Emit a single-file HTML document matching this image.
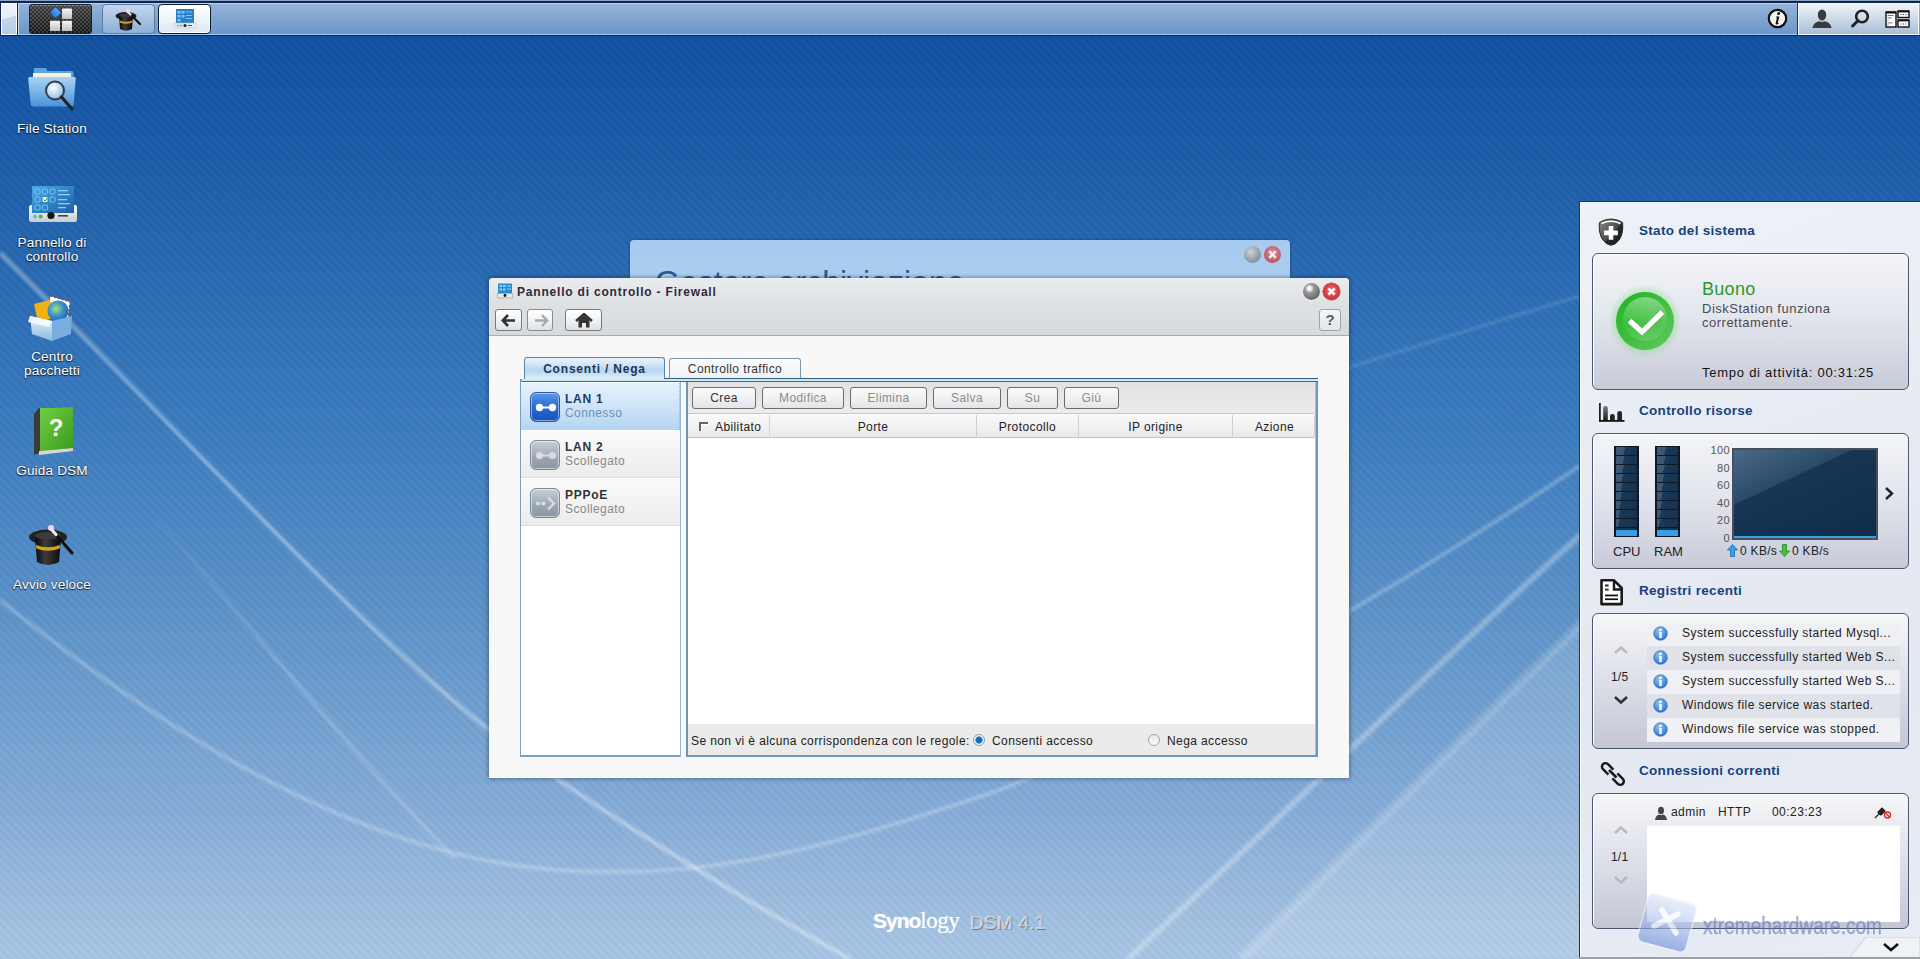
<!DOCTYPE html>
<html><head><meta charset="utf-8">
<style>
*{box-sizing:border-box;margin:0;padding:0}
html,body{width:1920px;height:959px;overflow:hidden}
body{position:relative;font-family:"Liberation Sans",sans-serif;background:#3b7cbf}
.abs{position:absolute}
#bg{position:absolute;left:0;top:0;width:1920px;height:959px}
/* top bar */
#topbar{position:absolute;left:0;top:0;width:1920px;height:36px;
 background:linear-gradient(#8ca2c2 0 1px,#0c2450 1px 3px,#b8d4f4 3px 4px,#95b3d8 4px,#6b97c9 34px,#a6c8ee 34px 35px,#0a2a5c 35px 36px)}
.tbtn{position:absolute;top:4px;height:30px;border-radius:4px}
/* desktop */
.dlabel{position:absolute;width:104px;text-align:center;color:#fff;font-size:13.6px;line-height:14px;letter-spacing:.15px;
 text-shadow:0 1px 1px rgba(0,0,0,.75),0 0 2px rgba(0,0,0,.5)}

.t{font-size:12px;letter-spacing:.4px;color:#222;white-space:nowrap;position:absolute;line-height:14px}
.tb{font-size:12px;letter-spacing:.75px;font-weight:bold;color:#333;white-space:nowrap;position:absolute;line-height:14px}
.btn{position:absolute;height:22px;border:1px solid #6c6c6c;border-radius:3px;background:linear-gradient(#fbfbfc,#f0f1f3 50%,#e2e5ea);
 font-size:12px;letter-spacing:.4px;text-align:center;line-height:21px;color:#8c8c8c}
.hdr{position:absolute;top:415px;height:23px;font-size:12px;letter-spacing:.4px;color:#222;text-align:center;line-height:24px;border-right:1px solid #d0d0d0}
.wbtn{position:absolute;width:17px;height:17px;border-radius:50%}

.pt{position:absolute;font-size:13.5px;font-weight:bold;color:#17427e;letter-spacing:.3px;white-space:nowrap;line-height:16px}
.box{position:absolute;left:1592px;width:317px;border:1px solid #4a5870;border-radius:6px;
 background:linear-gradient(#f4f5f8,#e4e6ee 45%,#c8cad8);box-shadow:inset 1px 1px 0 #fff}
.rt{position:absolute;font-size:13px;color:#222;white-space:nowrap;letter-spacing:.35px;line-height:15px}
</style></head><body>
<svg id="bg" width="1920" height="959" viewBox="0 0 1920 959">
 <defs>
  <linearGradient id="g1" x1="0" y1="0" x2="0" y2="1">
   <stop offset="0" stop-color="#0e4c9c"/>
   <stop offset="0.07" stop-color="#1254a3"/>
   <stop offset="0.14" stop-color="#195aa7"/>
   <stop offset="0.45" stop-color="#3b7cbf"/>
   <stop offset="0.68" stop-color="#6598cb"/>
   <stop offset="0.845" stop-color="#86acd8"/>
   <stop offset="0.95" stop-color="#a0bfdf"/>
   <stop offset="1" stop-color="#a8c5e5"/>
  </linearGradient>
  <pattern id="stripes" width="6" height="6" patternUnits="userSpaceOnUse" patternTransform="rotate(-45)">
   <rect width="2.5" height="6" fill="rgba(0,20,60,0.035)"/><rect x="3" width="2.5" height="6" fill="rgba(255,255,255,0.02)"/>
  </pattern>
 </defs>
 <rect width="1920" height="959" fill="url(#g1)"/>
 <defs>
  <filter id="blur1" x="-10%" y="-10%" width="120%" height="120%"><feGaussianBlur stdDeviation="1.6"/></filter>
  <filter id="blur8" x="-20%" y="-20%" width="140%" height="140%"><feGaussianBlur stdDeviation="10"/></filter>
  <linearGradient id="bfade" gradientUnits="userSpaceOnUse" x1="140" y1="500" x2="455" y2="859"><stop offset="0" stop-color="#fff" stop-opacity="0"/><stop offset=".5" stop-color="#fff" stop-opacity=".22"/><stop offset="1" stop-color="#fff" stop-opacity=".18"/></linearGradient>
  <linearGradient id="bandg" x1="0" y1="1" x2="1" y2="0"><stop offset="0" stop-color="#fff" stop-opacity=".18"/><stop offset="1" stop-color="#fff" stop-opacity=".05"/></linearGradient>
 </defs>
 <path d="M1240 959 C1350 850 1470 730 1600 605 L1600 959Z" fill="#fff" fill-opacity=".15" filter="url(#blur1)"/>
 <path d="M1240 959 C1350 850 1470 730 1600 605" fill="none" stroke="#fff" stroke-opacity=".14" stroke-width="10" filter="url(#blur1)"/>
 <g fill="none" stroke="#fff" filter="url(#blur1)">
  <path d="M0 253 C150 400 350 620 483 725 C560 785 700 875 850 959" stroke-opacity=".30" stroke-width="4.5"/>
  <path d="M0 253 C150 400 350 620 483 725 C560 785 700 875 850 959" stroke-opacity=".25" stroke-width="1.5"/>
  <path d="M0 600 C150 720 330 840 520 866 C700 890 850 840 1000 790 C1150 730 1400 590 1600 452" stroke-opacity=".22" stroke-width="4"/>
  <path d="M0 600 C150 720 330 840 520 866 C700 890 850 840 1000 790 C1150 730 1400 590 1600 452" stroke-opacity=".15" stroke-width="1.5"/>
  <path d="M1128 959 C1300 800 1450 650 1600 518" stroke-opacity=".22" stroke-width="7"/>
  <path d="M1128 959 C1300 800 1450 650 1600 518" stroke-opacity=".2" stroke-width="2"/>
  <path d="M1100 445 C1250 400 1400 350 1600 290" stroke-opacity=".14" stroke-width="3"/>
 </g>
 <path d="M140 500 C230 600 330 730 455 859" fill="none" stroke="url(#bfade)" stroke-width="3.5" filter="url(#blur1)"/>
 <rect width="1920" height="959" fill="url(#stripes)"/>
</svg>

<div id="topbar">
 <div class="abs" style="left:0;top:2px;width:18px;height:34px;background:#0c2450"></div><div class="abs" style="left:1px;top:3px;width:16px;height:32px;background:linear-gradient(165deg,#eef3f9 0%,#e6edf6 45%,#c4d6ea 46%,#b6cae4 100%);border:1px solid #fff"></div><div class="abs" style="left:18px;top:3px;width:1px;height:32px;background:#c8dcf4"></div>
 <!-- start button -->
 <div class="tbtn" style="left:29px;width:63px;border-radius:3px;background:
   linear-gradient(rgba(255,255,255,.12),rgba(0,0,0,.25)),repeating-conic-gradient(#4a4a4a 0 25%,#222 0 50%) 0 0/4px 4px;border:1px solid #14202e;box-shadow:inset 0 1px 0 rgba(255,255,255,.25)">
  <svg class="abs" style="left:18px;top:1px" width="26" height="27" viewBox="0 0 26 27">
   <defs><linearGradient id="sq" x1="0" y1="0" x2="0" y2="1"><stop offset="0" stop-color="#f6f6f6"/><stop offset="1" stop-color="#c0c0c0"/></linearGradient>
   <linearGradient id="dia" x1="0" y1="0" x2="0" y2="1"><stop offset="0" stop-color="#5aa8f8"/><stop offset="1" stop-color="#2a78d8"/></linearGradient></defs>
   <rect x="3.2" y="2.4" width="8.4" height="8.4" rx="1" transform="rotate(45 7.4 6.6)" fill="url(#dia)" stroke="#1a3a6a" stroke-width=".6"/>
   <rect x="14" y="2.5" width="10" height="10.5" rx="1.2" fill="url(#sq)"/>
   <rect x="2" y="14.8" width="10" height="10.3" rx="1.2" fill="url(#sq)"/>
   <rect x="14" y="14.8" width="10" height="10.3" rx="1.2" fill="url(#sq)"/>
  </svg>
 </div>
 <!-- hat button -->
 <div class="tbtn" style="left:102px;width:53px;background:linear-gradient(#c4d6ec,#8fb0d8);border:1px solid #5a7ca8">
  <svg class="abs" style="left:11px;top:2px" width="30" height="26" viewBox="0 0 30 26">
   <defs><linearGradient id="hat2" x1="0" y1="0" x2="1" y2="0"><stop offset="0" stop-color="#050505"/><stop offset=".4" stop-color="#3a3a3a"/><stop offset="1" stop-color="#050505"/></linearGradient></defs>
   <ellipse cx="12" cy="9" rx="10.5" ry="4" fill="#1a1a1a"/>
   <ellipse cx="12" cy="8.5" rx="7" ry="2.2" fill="#3a3a3a"/>
   <path d="M5 9 L6 22 Q12 25.5 18 22 L19 9 Q12 12 5 9Z" fill="url(#hat2)"/>
   <path d="M5.5 13.5 Q12 16 18.5 13.5 L18.3 15.5 Q12 18 5.7 15.5 Z" fill="#d0a020"/>
   <line x1="14" y1="5" x2="26" y2="17" stroke="#111" stroke-width="2.2" stroke-linecap="round"/>
   <line x1="14" y1="5" x2="16.5" y2="7.5" stroke="#e8e8f0" stroke-width="2.2" stroke-linecap="round"/>
   <circle cx="14" cy="4" r="2.2" fill="#f0d8ff" opacity=".85"/>
  </svg>
 </div>
 <!-- control panel button (active) -->
 <div class="tbtn" style="left:158px;width:53px;background:linear-gradient(#ffffff,#dde8f4);border:1px solid #0d1c30;box-shadow:inset 0 0 0 1px #fff">
  <svg class="abs" style="left:14px;top:4px" width="24" height="21" viewBox="0 0 24 21">
   <rect x="3" y="0" width="18" height="14" fill="#2a80c8"/>
   <g fill="#7fc4f0"><rect x="4.5" y="2" width="3" height="2.5"/><rect x="8.5" y="2" width="3" height="2.5"/><rect x="4.5" y="6" width="3" height="2.5"/><rect x="8.5" y="6" width="3" height="2.5"/><rect x="4.5" y="10" width="3" height="2.5"/><rect x="13" y="2.5" width="6" height="1"/><rect x="13" y="6" width="6" height="1"/><rect x="13" y="9" width="6" height="1"/></g>
   <rect x="1" y="14" width="22" height="5" rx="1" fill="#e8eaec" stroke="#b8bcc0" stroke-width=".5"/>
   <circle cx="5" cy="16.5" r="1" fill="#5ab0e0"/><circle cx="8" cy="16.5" r="1" fill="#58c058"/><circle cx="12" cy="16.5" r="1.6" fill="#222"/><rect x="15" y="16" width="4" height="1" fill="#555"/>
  </svg>
 </div>
 <!-- right side -->
 <svg class="abs" style="left:1767px;top:8px" width="21" height="21" viewBox="0 0 21 21">
  <circle cx="10.5" cy="10.5" r="8.7" fill="#f4f4f4" stroke="#111" stroke-width="2.2"/>
  <circle cx="11.6" cy="5.6" r="1.5" fill="#111"/>
  <path d="M9.2 8.6 L12.4 8.4 L10.8 14.6 Q10.6 15.6 11.8 15 L12 15.6 Q9.6 17.2 8.8 16.2 Q8.4 15.6 8.8 14.4 L10 9.6 L9 9.6 Z" fill="#111"/>
 </svg>
 <div class="abs" style="left:1797px;top:3px;width:1px;height:32px;background:#173a66"></div>
 <div class="abs" style="left:1798px;top:3px;width:121px;height:32px;background:linear-gradient(#f0f4f9,#c9d6e6 55%,#a9bdd8);border:1px solid #f4f8ff"></div>
 <svg class="abs" style="left:1811px;top:8px" width="22" height="21" viewBox="0 0 22 21">
  <ellipse cx="11" cy="7" rx="4.2" ry="5.6" fill="#3a3a3a"/>
  <path d="M1.5 20 Q2 15 8 13.2 L11 14 L14 13.2 Q20 15 20.5 20 Z" fill="#3a3a3a"/>
 </svg>
 <svg class="abs" style="left:1849px;top:7px" width="22" height="22" viewBox="0 0 22 22">
  <circle cx="13" cy="9.5" r="5.8" fill="none" stroke="#222" stroke-width="2.6"/>
  <line x1="9" y1="13.6" x2="3.6" y2="19" stroke="#222" stroke-width="3" stroke-linecap="round"/>
 </svg>
 <svg class="abs" style="left:1885px;top:10px" width="26" height="19" viewBox="0 0 26 19">
  <rect x="1" y="2" width="10" height="15" fill="#fff" stroke="#111" stroke-width="1.4"/><rect x="1" y="1.5" width="10" height="2" fill="#111"/>
  <g fill="#555"><rect x="2.5" y="5" width="6" height=".8"/><rect x="2.5" y="7.5" width="4" height=".8"/><rect x="2.5" y="10" width="1" height=".8"/><rect x="2.5" y="12.5" width="5" height=".8"/><rect x="2.5" y="14.5" width="1" height=".8"/></g>
  <rect x="13" y="1" width="11" height="6.5" fill="#fff" stroke="#111" stroke-width="1.4"/><rect x="13" y="0.6" width="11" height="1.8" fill="#111"/>
  <rect x="13" y="10" width="11" height="7" fill="#fff" stroke="#111" stroke-width="1.4"/><rect x="13" y="9.6" width="11" height="1.8" fill="#111"/>
  <g fill="#333"><rect x="15.5" y="4" width="1" height="1"/><rect x="18" y="4" width="1" height="1"/><rect x="20.5" y="4" width="1" height="1"/><rect x="15.5" y="13.5" width="1" height="1"/><rect x="18" y="13.5" width="1" height="1"/><rect x="20.5" y="13.5" width="1" height="1"/></g>
 </svg>
</div>

<!-- desktop icons -->
<svg class="abs" style="left:26px;top:64px" width="52" height="50" viewBox="0 0 52 50">
 <defs>
  <linearGradient id="fold" x1="0" y1="0" x2="0" y2="1"><stop offset="0" stop-color="#a8d4f4"/><stop offset="1" stop-color="#4a94d8"/></linearGradient>
  <radialGradient id="lens" cx=".4" cy=".35" r=".7"><stop offset="0" stop-color="#ffffff"/><stop offset=".6" stop-color="#b8d8f0"/><stop offset="1" stop-color="#7ab0dc"/></radialGradient>
 </defs>
 <path d="M8 4 h12 l1.5 3 h24 q2 0 2 2 v4 h-40 z" fill="#5ea2dc"/>
 <rect x="7" y="9" width="38" height="5" fill="#f4f2e0"/>
 <path d="M3.5 13 h45 q1.5 0 1.2 1.5 l-2 26 q-.2 2 -2 2 h-39 q-1.8 0 -2-2 l-2.5 -26 q-.2-1.5 1.3-1.5z" fill="url(#fold)"/>
 <circle cx="29" cy="26.5" r="9" fill="url(#lens)" stroke="#3a3a48" stroke-width="2"/>
 <line x1="35.5" y1="33" x2="46" y2="45" stroke="#222" stroke-width="3.2" stroke-linecap="round"/>
</svg>
<div class="dlabel" style="left:0;top:122px">File Station</div>

<svg class="abs" style="left:28px;top:185px" width="50" height="38" viewBox="0 0 50 38">
 <defs><linearGradient id="cpscr" x1="0" y1="0" x2="1" y2="1"><stop offset="0" stop-color="#4aa8e8"/><stop offset="1" stop-color="#1a5ea8"/></linearGradient>
 <linearGradient id="cpbase" x1="0" y1="0" x2="0" y2="1"><stop offset="0" stop-color="#f8f8f8"/><stop offset="1" stop-color="#c8ccd0"/></linearGradient></defs>
 <rect x="4" y="1" width="42" height="27" fill="url(#cpscr)"/>
 <g fill="none" stroke="#6cc8f0" stroke-width="1"><rect x="7" y="4" width="5" height="5" rx="1"/><rect x="14.5" y="4" width="5" height="5" rx="1"/><rect x="22" y="4" width="5" height="5" rx="1"/><rect x="7" y="12" width="5" height="5" rx="1"/><rect x="22" y="12" width="5" height="5" rx="1"/><rect x="7" y="20" width="5" height="5" rx="1"/><rect x="14.5" y="20" width="5" height="5" rx="1"/></g>
 <rect x="14.5" y="12" width="5" height="5" rx="1" fill="#e8f4f0"/><path d="M15.5 14.5 l1.5 1.5 l2.5-3" stroke="#2a8a3a" stroke-width="1" fill="none"/>
 <g fill="#8ad0f4"><rect x="30" y="5" width="10" height="1.3"/><rect x="30" y="9" width="12" height="1.3"/><rect x="30" y="14" width="9" height="1.3"/><rect x="30" y="18" width="12" height="1.3"/><rect x="30" y="22" width="8" height="1.3"/></g>
 <path d="M1 22 q0-2 2-2 h1 v8 h42 v-8 h1 q2 0 2 2 v13 q0 2-2 2 h-44 q-2 0-2-2z" fill="url(#cpbase)"/>
 <circle cx="7" cy="31.5" r="2" fill="#58b8e8"/><circle cx="12.5" cy="31.5" r="2" fill="#48b848"/><circle cx="23" cy="30.5" r="3.6" fill="#151515"/><rect x="30" y="30" width="10" height="1.6" fill="#444"/>
</svg>
<div class="dlabel" style="left:0;top:236px;line-height:14px">Pannello di<br>controllo</div>

<svg class="abs" style="left:28px;top:294px" width="48" height="48" viewBox="0 0 48 48">
 <defs><linearGradient id="box1" x1="0" y1="0" x2="0" y2="1"><stop offset="0" stop-color="#e8f2fc"/><stop offset="1" stop-color="#8cb8e4"/></linearGradient>
 <radialGradient id="globe" cx=".4" cy=".4" r=".7"><stop offset="0" stop-color="#a8e070"/><stop offset=".5" stop-color="#3a90d0"/><stop offset="1" stop-color="#1a5aa8"/></radialGradient></defs>
 <path d="M22 2 l20 6 l-2 16 l-20 -4z" fill="#fff" stroke="#c02020" stroke-width="1" stroke-dasharray="2 2"/>
 <path d="M6 10 l16 -4 l4 18 l-16 4z" fill="#f0b010"/>
 <circle cx="30" cy="17" r="10.5" fill="url(#globe)"/>
 <path d="M2 22 l22 5 l0 20 l-20 -7z" fill="url(#box1)"/>
 <path d="M24 27 l20 -5 l-1 18 l-19 7z" fill="#7aaee0"/>
 <path d="M2 22 l22 5 l-3 6 l-21 -5z" fill="#f4f8fc"/>
</svg>
<div class="dlabel" style="left:0;top:350px;line-height:14px">Centro<br>pacchetti</div>

<svg class="abs" style="left:31px;top:406px" width="44" height="50" viewBox="0 0 44 50">
 <defs><linearGradient id="book" x1="0" y1="0" x2="1" y2="1"><stop offset="0" stop-color="#70d040"/><stop offset="1" stop-color="#3a9a20"/></linearGradient></defs>
 <path d="M3 8 l5 -6 l34 -1 l0 42 l-34 4 l-5 2z" fill="#3a3a3a"/>
 <path d="M9 2 l33 -1 l0 41 l-33 3z" fill="url(#book)"/>
 <path d="M8 45 l34 -3 l0 3 l-34 4z" fill="#d8d8c8"/>
 <text x="25" y="30" font-family="Liberation Sans" font-weight="bold" font-size="24" fill="#fff" text-anchor="middle">?</text>
</svg>
<div class="dlabel" style="left:0;top:464px">Guida DSM</div>

<svg class="abs" style="left:26px;top:520px" width="54" height="48" viewBox="0 0 54 48">
 <defs><linearGradient id="hat" x1="0" y1="0" x2="1" y2="0"><stop offset="0" stop-color="#0a0a0a"/><stop offset=".4" stop-color="#3a3a3a"/><stop offset="1" stop-color="#0a0a0a"/></linearGradient></defs>
 <ellipse cx="22" cy="17" rx="19" ry="7.5" fill="#222"/>
 <ellipse cx="22" cy="16" rx="13" ry="4" fill="#3c3c3c"/>
 <path d="M9 17 l2 25 q11 6 22 0 l2 -25 q-13 5 -26 0z" fill="url(#hat)"/>
 <path d="M10 25 q12 4.5 24 0 l-.3 3.5 q-11.7 4.5 -23.4 0z" fill="#d8a018"/>
 <line x1="26" y1="10" x2="46" y2="33" stroke="#111" stroke-width="3.2" stroke-linecap="round"/>
 <line x1="26" y1="10" x2="30" y2="14.5" stroke="#eee" stroke-width="3.2" stroke-linecap="round"/>
 <circle cx="25" cy="8" r="3" fill="#f0e8ff" opacity=".9"/>
</svg>
<div class="dlabel" style="left:0;top:578px">Avvio veloce</div>

<!-- background window -->
<div class="abs" style="left:630px;top:240px;width:660px;height:60px;border-radius:4px 4px 0 0;background:linear-gradient(#a6caee,#afd2f2);box-shadow:0 0 3px rgba(0,0,0,.35);overflow:hidden">
 <div class="abs" style="left:25px;top:24px;font-size:32px;color:#2a5a96;white-space:nowrap;letter-spacing:0">Gestore archiviazione</div>
</div>
<div class="wbtn" style="left:1244px;top:246px;background:radial-gradient(circle at 40% 35%,#d8d8d8,#8a8a8a 60%,#6a6a6a);opacity:.75"></div>
<div class="wbtn" style="left:1264px;top:246px;background:radial-gradient(circle at 50% 40%,#f08080,#c83030 70%);opacity:.75">
 <svg class="abs" style="left:0;top:0" width="17" height="17"><path d="M5.2 5.2 L11.8 11.8 M11.8 5.2 L5.2 11.8" stroke="#fff" stroke-width="2.4"/></svg></div>

<!-- front window -->
<div id="win" class="abs" style="left:489px;top:278px;width:860px;height:500px;border-radius:4px 4px 0 0;background:#f8f8f8;box-shadow:0 0 4px 1px rgba(0,0,0,.35);overflow:hidden">
 <div class="abs" style="left:0;top:0;width:860px;height:58px;background:linear-gradient(#eaecee,#dfe2e5 40%,#d7dadd);border-bottom:1px solid #a8abae"></div>
</div>
<!-- title icon -->
<svg class="abs" style="left:497px;top:283px" width="16" height="16" viewBox="0 0 16 16">
 <rect x="1" y="0.5" width="14" height="10" fill="#2a8ad0"/>
 <g fill="#8ad8f8"><rect x="2.5" y="2" width="2.5" height="2"/><rect x="6" y="2" width="2.5" height="2"/><rect x="2.5" y="5.5" width="2.5" height="2"/><rect x="6" y="5.5" width="2.5" height="2"/><rect x="10" y="2.5" width="4" height="1"/><rect x="10" y="5.5" width="4" height="1"/></g>
 <rect x="0.5" y="10.5" width="15" height="4.5" fill="#e8e8ea" stroke="#9a9ca0" stroke-width=".6"/>
 <circle cx="8" cy="12.5" r="1.4" fill="#111"/>
</svg>
<div class="tb" style="left:517px;top:285px;color:#2e2a38;letter-spacing:.8px">Pannello di controllo - Firewall</div>
<!-- min / close -->
<div class="wbtn" style="left:1303px;top:283px;width:17px;height:17px;background:radial-gradient(circle at 38% 32%,#fafafa 0 10%,#9a9a9a 28%,#6c6c6c 70%,#585858);box-shadow:0 1px 1px rgba(255,255,255,.8)"></div>
<div class="wbtn" style="left:1323px;top:283px;width:17px;height:17px;background:radial-gradient(circle at 50% 45%,#f07878,#d83a3a 55%,#b82424);box-shadow:0 0 0 .5px #a02020">
 <svg class="abs" style="left:0;top:0" width="17" height="17"><path d="M5.3 5.3 L11.7 11.7 M11.7 5.3 L5.3 11.7" stroke="#fff" stroke-width="2.6"/></svg></div>
<!-- nav buttons -->
<div class="abs" style="left:495px;top:309px;width:27px;height:22px;border:1px solid #77797c;border-radius:3px;background:linear-gradient(#ffffff,#f0f1f2 55%,#dfe1e3)">
 <svg class="abs" style="left:5px;top:4px" width="16" height="13" viewBox="0 0 16 13"><path d="M7 1 L1.8 6.5 L7 12 M2 6.5 H14" stroke="#333" stroke-width="2.6" fill="none" stroke-linejoin="miter"/></svg></div>
<div class="abs" style="left:527px;top:309px;width:26px;height:22px;border:1px solid #8a8c8f;border-radius:3px;background:linear-gradient(#ffffff,#f0f1f2 55%,#dfe1e3)">
 <svg class="abs" style="left:5px;top:4px" width="16" height="13" viewBox="0 0 16 13"><path d="M9 1 L14.2 6.5 L9 12 M14 6.5 H2" stroke="#a8a8a8" stroke-width="2.4" fill="none"/></svg></div>
<div class="abs" style="left:565px;top:309px;width:37px;height:22px;border:1px solid #77797c;border-radius:3px;background:linear-gradient(#ffffff,#f0f1f2 55%,#dfe1e3)">
 <svg class="abs" style="left:9px;top:3px" width="18" height="15" viewBox="0 0 18 15"><path d="M1 8 L9 1 L17 8" stroke="#333" stroke-width="2.4" fill="none"/><path d="M3.5 7 L9 2.5 L14.5 7 V14.5 H11 V10 H7 V14.5 H3.5Z" fill="#333"/></svg></div>
<div class="abs" style="left:1319px;top:309px;width:22px;height:22px;border:1px solid #a0a2a5;border-radius:3px;background:linear-gradient(#f4f5f6,#e4e6e8)">
 <div class="abs" style="left:0;top:0;width:20px;text-align:center;font-weight:bold;font-size:15px;line-height:20px;color:#5a5c60">?</div></div>

<!-- tabs -->
<div class="abs" style="left:524px;top:357px;width:141px;height:23px;border:1px solid #5a88ac;border-bottom:none;border-radius:3px 3px 0 0;background:linear-gradient(#e6f2fb 0%,#d2e6f6 30%,#b6d4ee 55%,#cfe5f6 80%,#def0fb)">
 <div class="tb" style="left:0;top:4px;width:139px;text-align:center;color:#1c3658;letter-spacing:.8px">Consenti / Nega</div></div>
<div class="abs" style="left:669px;top:358px;width:132px;height:21px;border:1px solid #7a98b0;border-bottom:none;border-radius:3px 3px 0 0;background:linear-gradient(#fbfcfd,#eef1f4)">
 <div class="t" style="left:0;top:3px;width:130px;text-align:center;color:#333">Controllo traffico</div></div>
<div class="abs" style="left:664px;top:378px;width:654px;height:1px;background:#3a5a74"></div>
<div class="abs" style="left:521px;top:379px;width:797px;height:3px;background:linear-gradient(#c4ecfa 0 2px,#3e6c8e 2px)"></div>
<div class="abs" style="left:520px;top:379px;width:2px;height:378px;background:#7aa0c0"></div>
<!-- left list -->
<div class="abs" style="left:521px;top:382px;width:160px;height:374px;background:#fff"></div>
<div class="abs" style="left:520px;top:755px;width:162px;height:2px;background:#7aa0c0"></div>
<div class="abs" style="left:680px;top:382px;width:1px;height:375px;background:#9ab8d4"></div>
<div class="abs" style="left:681px;top:382px;width:5px;height:375px;background:#f6f8fa"></div>
<div class="abs" style="left:686px;top:382px;width:1.5px;height:375px;background:#6e96b8"></div>
<!-- list items -->
<div class="abs" style="left:521px;top:383px;width:159px;height:47px;background:linear-gradient(#e6f2fd,#cfe4f8 50%,#b4d4f2);border-right:1px dotted #8ab4dc"></div>
<div class="abs" style="left:521px;top:431px;width:159px;height:47px;background:linear-gradient(#fafafa,#ececec);border-bottom:1px solid #e0e0e0"></div>
<div class="abs" style="left:521px;top:479px;width:159px;height:47px;background:linear-gradient(#fafafa,#ececec);border-bottom:1px solid #e0e0e0"></div>
<div class="abs" style="left:530px;top:392px;width:30px;height:30px;border-radius:6px;border:1px solid #2a5ca8;box-shadow:inset 0 0 0 1px rgba(255,255,255,.45);background:linear-gradient(#5a9ae8,#2466d0 55%,#1a54b8)">
 <svg class="abs" style="left:3px;top:9px" width="24" height="11" viewBox="0 0 24 11"><circle cx="5.5" cy="5.5" r="3.7" fill="#fff"/><circle cx="18.5" cy="5.5" r="3.7" fill="#fff"/><rect x="8" y="4.5" width="8" height="2" fill="#fff"/></svg></div>
<div class="abs" style="left:530px;top:440px;width:30px;height:30px;border-radius:6px;border:1px solid #7a8a9a;box-shadow:inset 0 0 0 1px rgba(255,255,255,.5);background:linear-gradient(#c8d0d8,#9aa6b2 60%,#8a96a4)">
 <svg class="abs" style="left:3px;top:9px" width="24" height="11" viewBox="0 0 24 11"><circle cx="5.5" cy="5.5" r="3.6" fill="#d8dde2"/><circle cx="18.5" cy="5.5" r="3.6" fill="#d8dde2"/><rect x="8" y="4.5" width="8" height="2" fill="#d8dde2"/></svg></div>
<div class="abs" style="left:530px;top:488px;width:30px;height:30px;border-radius:6px;border:1px solid #7a8a9a;box-shadow:inset 0 0 0 1px rgba(255,255,255,.5);background:linear-gradient(#c8d0d8,#9aa6b2 60%,#8a96a4)">
 <svg class="abs" style="left:3px;top:6px" width="24" height="17" viewBox="0 0 24 17"><circle cx="4" cy="8.5" r="2.1" fill="#d8dde2"/><circle cx="9.5" cy="8.5" r="2.1" fill="#d8dde2"/><path d="M14 2.5 L20 8.5 L14 14.5" stroke="#d8dde2" stroke-width="2.4" fill="none"/></svg></div>
<div class="tb" style="left:565px;top:392px;color:#1c3a68">LAN 1</div>
<div class="t" style="left:565px;top:406px;color:#6a90b8">Connesso</div>
<div class="tb" style="left:565px;top:440px;color:#333">LAN 2</div>
<div class="t" style="left:565px;top:454px;color:#888">Scollegato</div>
<div class="tb" style="left:565px;top:488px;color:#333">PPPoE</div>
<div class="t" style="left:565px;top:502px;color:#888">Scollegato</div>
<!-- grid -->
<div class="abs" style="left:688px;top:382px;width:628px;height:375px;background:#fff"></div>
<div class="abs" style="left:1315px;top:382px;width:3px;height:375px;background:linear-gradient(90deg,#e8eef4,#6a98c0 33%,#6a98c0)"></div>
<div class="abs" style="left:686px;top:755px;width:632px;height:2px;background:#6e96b8"></div>
<div class="abs" style="left:688px;top:382px;width:627px;height:32px;background:linear-gradient(#e2e2e2,#ececec);border-bottom:1px solid #c8c8c8"></div>
<div class="btn" style="left:692px;top:387px;width:64px;color:#333">Crea</div>
<div class="btn" style="left:762px;top:387px;width:82px">Modifica</div>
<div class="btn" style="left:850px;top:387px;width:77px">Elimina</div>
<div class="btn" style="left:933px;top:387px;width:68px">Salva</div>
<div class="btn" style="left:1007px;top:387px;width:51px">Su</div>
<div class="btn" style="left:1064px;top:387px;width:55px">Giù</div>
<div class="abs" style="left:688px;top:414px;width:627px;height:24px;background:linear-gradient(#fafafa,#e9e9e9);border-bottom:1px solid #c4c4c4"></div>
<div class="hdr" style="left:688px;width:82px;text-align:left;padding-left:27px;border-right:1px solid #d4d4d4">Abilitato</div>
<div class="abs" style="left:699px;top:422px;width:9px;height:9px;border-top:2px solid #666;border-left:2px solid #666;box-shadow:1px 1px 0 #fff inset"></div>
<div class="hdr" style="left:770px;width:207px">Porte</div>
<div class="hdr" style="left:977px;width:102px">Protocollo</div>
<div class="hdr" style="left:1079px;width:154px">IP origine</div>
<div class="hdr" style="left:1233px;width:82px;padding-left:2px">Azione</div>
<!-- footer -->
<div class="abs" style="left:688px;top:724px;width:627px;height:31px;background:#ebebeb"></div>
<div class="t" style="left:691px;top:734px;color:#222">Se non vi è alcuna corrispondenza con le regole:</div>
<div class="abs" style="left:973px;top:734px;width:12px;height:12px;border-radius:50%;border:1px solid #8a9aa8;background:radial-gradient(circle,#1a6ab8 0 2.5px,#5aa0d8 3.5px,#f4f8fc 4px)"></div>
<div class="t" style="left:992px;top:734px;color:#222">Consenti accesso</div>
<div class="abs" style="left:1148px;top:734px;width:12px;height:12px;border-radius:50%;border:1px solid #a0a4a8;background:linear-gradient(#e8e8e8,#fafafa)"></div>
<div class="t" style="left:1167px;top:734px;color:#222">Nega accesso</div>

<!-- right panel -->
<div class="abs" style="left:1579px;top:201px;width:341px;height:758px;background:linear-gradient(160deg,#eef2f8 0%,#e6ebf3 40%,#e4e9f1 60%,#e8ecf4 100%);border-left:1px solid #163660;border-top:1px solid #163660;box-shadow:inset 1px 1px 0 #fff"></div>
<svg class="abs" style="left:1598px;top:218px" width="26" height="29" viewBox="0 0 26 29">
 <defs><linearGradient id="sh" x1="0" y1="0" x2="1" y2="1"><stop offset="0" stop-color="#8a8a8a"/><stop offset=".55" stop-color="#4a4a4a"/><stop offset=".56" stop-color="#2a2a2a"/><stop offset="1" stop-color="#1a1a1a"/></linearGradient></defs>
 <path d="M13 1 Q20 1.3 24.6 4.5 Q25.6 15 21.5 21.5 Q17.5 27 13 27.3 Q8.5 27 4.5 21.5 Q.4 15 1.4 4.5 Q6 1.3 13 1z" fill="url(#sh)" stroke="#2a2a2a" stroke-width="1"/>
 <path d="M3.5 5.5 Q13 1 22.5 5.5" stroke="#fff" stroke-width="1.4" fill="none"/>
 <path d="M10.7 8 h4.6 v4.6 h4.6 v4.6 h-4.6 v4.6 h-4.6 v-4.6 h-4.6 v-4.6 h4.6z" fill="#fff"/>
</svg>
<div class="pt" style="left:1639px;top:223px">Stato del sistema</div>
<div class="box" style="top:253px;height:137px"></div>
<svg class="abs" style="left:1608px;top:284px" width="76" height="76" viewBox="0 0 76 76">
 <defs>
  <radialGradient id="glow" cx=".5" cy=".5" r=".5"><stop offset=".6" stop-color="#60d060" stop-opacity=".6"/><stop offset="1" stop-color="#80e080" stop-opacity="0"/></radialGradient>
  <linearGradient id="gball" x1="0" y1="0" x2="1" y2="1"><stop offset="0" stop-color="#1eb41e"/><stop offset="1" stop-color="#60c860"/></linearGradient>
  <linearGradient id="ghl" x1="0" y1="0" x2="0" y2="1"><stop offset="0" stop-color="#fff" stop-opacity=".4"/><stop offset=".6" stop-color="#fff" stop-opacity=".05"/><stop offset="1" stop-color="#fff" stop-opacity=".12"/></linearGradient>
 </defs>
 <circle cx="37" cy="37" r="37" fill="url(#glow)"/>
 <circle cx="37" cy="37" r="29" fill="url(#gball)"/>
 <circle cx="37" cy="35" r="22" fill="url(#ghl)"/>
 <path d="M23.5 38.5 L34 48 L52.5 30" stroke="#fff" stroke-width="5.2" fill="none" stroke-linecap="square"/>
</svg>
<div class="abs" style="left:1702px;top:279px;font-size:18px;color:#2a9a2a;white-space:nowrap;letter-spacing:.3px">Buono</div>
<div class="rt" style="left:1702px;top:302px;color:#4a4a52;line-height:14px;letter-spacing:.5px">DiskStation funziona<br>correttamente.</div>
<div class="rt" style="left:1702px;top:365px;color:#111;letter-spacing:.75px">Tempo di attività: 00:31:25</div>

<!-- controllo risorse -->
<svg class="abs" style="left:1598px;top:402px" width="28" height="22" viewBox="0 0 28 22">
 <defs><linearGradient id="bars" x1="0" y1="0" x2="0" y2="1"><stop offset="0" stop-color="#7a7a7a"/><stop offset="1" stop-color="#1a1a1a"/></linearGradient></defs>
 <rect x="1" y="1" width="1.8" height="18.5" fill="#222"/><rect x="1" y="18" width="25.5" height="1.8" fill="#111"/>
 <path d="M5.2 18.5 V6 q0-2 2.2-2 h.2 q2.2 0 2.2 2 v12.5z" fill="url(#bars)"/>
 <path d="M12 18.5 V14 q0-2 2.4-2 h0 q2.4 0 2.4 2 v4.5z" fill="#222"/>
 <path d="M19.3 18.5 V11 q0-2 2.35-2 h0 q2.35 0 2.35 2 v7.5z" fill="#222"/>
</svg>
<div class="pt" style="left:1639px;top:403px">Controllo risorse</div>
<div class="box" style="top:433px;height:136px"></div>
<div class="abs" style="left:1614px;top:446px;width:25px;height:91px;background:#0c1826;padding:1px 2px"><div class="abs" style="left:2px;top:1px;width:21px;height:7.5px;background:linear-gradient(105deg,#3e5a74 0%,#3a5670 40%,#1a3858 41%,#16324e)"></div><div class="abs" style="left:2px;top:10px;width:21px;height:7.5px;background:linear-gradient(105deg,#3e5a74 0%,#3a5670 37%,#1a3858 38%,#16324e)"></div><div class="abs" style="left:2px;top:19px;width:21px;height:7.5px;background:linear-gradient(105deg,#3e5a74 0%,#3a5670 34%,#1a3858 35%,#16324e)"></div><div class="abs" style="left:2px;top:28px;width:21px;height:7.5px;background:linear-gradient(105deg,#3e5a74 0%,#3a5670 31%,#1a3858 32%,#16324e)"></div><div class="abs" style="left:2px;top:37px;width:21px;height:7.5px;background:linear-gradient(105deg,#3e5a74 0%,#3a5670 28%,#1a3858 29%,#16324e)"></div><div class="abs" style="left:2px;top:46px;width:21px;height:7.5px;background:linear-gradient(105deg,#3e5a74 0%,#3a5670 25%,#1a3858 26%,#16324e)"></div><div class="abs" style="left:2px;top:55px;width:21px;height:7.5px;background:linear-gradient(105deg,#3e5a74 0%,#3a5670 22%,#1a3858 23%,#16324e)"></div><div class="abs" style="left:2px;top:64px;width:21px;height:7.5px;background:linear-gradient(105deg,#3e5a74 0%,#3a5670 19%,#1a3858 20%,#16324e)"></div><div class="abs" style="left:2px;top:73px;width:21px;height:7.5px;background:linear-gradient(105deg,#3e5a74 0%,#3a5670 16%,#1a3858 17%,#16324e)"></div><div class="abs" style="left:2px;top:82px;width:21px;height:7.5px;background:#16324e"></div><div class="abs" style="left:2px;top:84px;width:21px;height:6px;background:#3a9ee6"></div></div><div class="abs" style="left:1655px;top:446px;width:25px;height:91px;background:#0c1826;padding:1px 2px"><div class="abs" style="left:2px;top:1px;width:21px;height:7.5px;background:linear-gradient(105deg,#3e5a74 0%,#3a5670 40%,#1a3858 41%,#16324e)"></div><div class="abs" style="left:2px;top:10px;width:21px;height:7.5px;background:linear-gradient(105deg,#3e5a74 0%,#3a5670 37%,#1a3858 38%,#16324e)"></div><div class="abs" style="left:2px;top:19px;width:21px;height:7.5px;background:linear-gradient(105deg,#3e5a74 0%,#3a5670 34%,#1a3858 35%,#16324e)"></div><div class="abs" style="left:2px;top:28px;width:21px;height:7.5px;background:linear-gradient(105deg,#3e5a74 0%,#3a5670 31%,#1a3858 32%,#16324e)"></div><div class="abs" style="left:2px;top:37px;width:21px;height:7.5px;background:linear-gradient(105deg,#3e5a74 0%,#3a5670 28%,#1a3858 29%,#16324e)"></div><div class="abs" style="left:2px;top:46px;width:21px;height:7.5px;background:linear-gradient(105deg,#3e5a74 0%,#3a5670 25%,#1a3858 26%,#16324e)"></div><div class="abs" style="left:2px;top:55px;width:21px;height:7.5px;background:linear-gradient(105deg,#3e5a74 0%,#3a5670 22%,#1a3858 23%,#16324e)"></div><div class="abs" style="left:2px;top:64px;width:21px;height:7.5px;background:linear-gradient(105deg,#3e5a74 0%,#3a5670 19%,#1a3858 20%,#16324e)"></div><div class="abs" style="left:2px;top:73px;width:21px;height:7.5px;background:linear-gradient(105deg,#3e5a74 0%,#3a5670 16%,#1a3858 17%,#16324e)"></div><div class="abs" style="left:2px;top:82px;width:21px;height:7.5px;background:#16324e"></div><div class="abs" style="left:2px;top:84px;width:21px;height:6px;background:#3a9ee6"></div></div>
<div class="rt" style="left:1613px;top:544px;font-size:13px;letter-spacing:0">CPU</div>
<div class="rt" style="left:1654px;top:544px;font-size:13px;letter-spacing:0">RAM</div>
<div class="abs" style="left:1692px;top:442px;width:38px;text-align:right;font-size:11px;line-height:17.5px;color:#555;letter-spacing:.4px">100<br>80<br>60<br>40<br>20<br>0</div>
<div class="abs" style="left:1732px;top:448px;width:146px;height:92px;border:2px solid #4a4e56;background:linear-gradient(155deg,#4a6a88 0%,#2a4a6a 35%,#173656 36%,#0e2c4a 100%)">
 <div class="abs" style="left:0;bottom:0;width:142px;height:2px;background:#3a9ee6"></div></div>
<svg class="abs" style="left:1883px;top:486px" width="12" height="15" viewBox="0 0 12 15"><path d="M3 2 L9 7.5 L3 13" stroke="#222" stroke-width="2.4" fill="none"/></svg>
<svg class="abs" style="left:1727px;top:544px" width="11" height="13" viewBox="0 0 11 13"><path d="M5.5 0.5 L10.5 6 H7.5 V12.5 H3.5 V6 H0.5Z" fill="#3aa0e8" stroke="#1a6ab8" stroke-width=".8"/></svg>
<div class="rt" style="left:1740px;top:544px;font-size:12px;letter-spacing:.3px">0 KB/s</div>
<svg class="abs" style="left:1779px;top:544px" width="11" height="13" viewBox="0 0 11 13"><path d="M5.5 12.5 L10.5 7 H7.5 V0.5 H3.5 V7 H0.5Z" fill="#48c048" stroke="#1a8a1a" stroke-width=".8"/></svg>
<div class="rt" style="left:1792px;top:544px;font-size:12px;letter-spacing:.3px">0 KB/s</div>

<!-- registri recenti -->
<svg class="abs" style="left:1599px;top:578px" width="25" height="28" viewBox="0 0 25 28">
 <path d="M2.5 2.3 H15 L22.7 10 V26.1 H2.5 Z" fill="#fff" stroke="#1a1a1a" stroke-width="2.6" stroke-linejoin="round"/>
 <path d="M15 2.3 V11.5 H22.7" fill="none" stroke="#1a1a1a" stroke-width="2.4"/>
 <rect x="6" y="6.5" width="3.6" height="2" fill="#222"/><rect x="6" y="10.6" width="3.6" height="2" fill="#333"/>
 <rect x="6" y="16.6" width="13" height="1.7" fill="#111"/><rect x="6" y="20.4" width="13" height="1.7" fill="#111"/>
</svg>
<div class="pt" style="left:1639px;top:583px">Registri recenti</div>
<div class="box" style="top:613px;height:136px;background:linear-gradient(#f6f7f9,#e2e4ec 40%,#c4c6d4)"></div>
<div class="abs" style="left:1647px;top:622px;width:253px;height:120px;background:#eef0f4"></div>
<div class="abs" style="left:1647px;top:646px;width:253px;height:24px;background:#dfe2e9"></div>
<div class="abs" style="left:1647px;top:670px;width:253px;height:24px;background:#eef0f5"></div>
<div class="abs" style="left:1647px;top:694px;width:253px;height:24px;background:#dfe2e9"></div>
<div class="abs" style="left:1647px;top:718px;width:253px;height:24px;background:#eff1f5"></div>
<svg class="abs" style="left:1653px;top:626px" width="15" height="15" viewBox="0 0 15 15"><defs><radialGradient id="ib0" cx=".4" cy=".3" r=".8"><stop offset="0" stop-color="#8ac4f4"/><stop offset="1" stop-color="#2a6ac8"/></radialGradient></defs><circle cx="7.5" cy="7.5" r="6.8" fill="url(#ib0)" stroke="#2a5aa8" stroke-width=".6"/><rect x="6.3" y="6" width="2.4" height="6" fill="#fff"/><circle cx="7.5" cy="3.9" r="1.3" fill="#fff"/></svg>
<div class="rt" style="left:1682px;top:626px;font-size:12px;letter-spacing:.45px">System successfully started Mysql...</div>
<svg class="abs" style="left:1653px;top:650px" width="15" height="15" viewBox="0 0 15 15"><defs><radialGradient id="ib1" cx=".4" cy=".3" r=".8"><stop offset="0" stop-color="#8ac4f4"/><stop offset="1" stop-color="#2a6ac8"/></radialGradient></defs><circle cx="7.5" cy="7.5" r="6.8" fill="url(#ib1)" stroke="#2a5aa8" stroke-width=".6"/><rect x="6.3" y="6" width="2.4" height="6" fill="#fff"/><circle cx="7.5" cy="3.9" r="1.3" fill="#fff"/></svg>
<div class="rt" style="left:1682px;top:650px;font-size:12px;letter-spacing:.45px">System successfully started Web S...</div>
<svg class="abs" style="left:1653px;top:674px" width="15" height="15" viewBox="0 0 15 15"><defs><radialGradient id="ib2" cx=".4" cy=".3" r=".8"><stop offset="0" stop-color="#8ac4f4"/><stop offset="1" stop-color="#2a6ac8"/></radialGradient></defs><circle cx="7.5" cy="7.5" r="6.8" fill="url(#ib2)" stroke="#2a5aa8" stroke-width=".6"/><rect x="6.3" y="6" width="2.4" height="6" fill="#fff"/><circle cx="7.5" cy="3.9" r="1.3" fill="#fff"/></svg>
<div class="rt" style="left:1682px;top:674px;font-size:12px;letter-spacing:.45px">System successfully started Web S...</div>
<svg class="abs" style="left:1653px;top:698px" width="15" height="15" viewBox="0 0 15 15"><defs><radialGradient id="ib3" cx=".4" cy=".3" r=".8"><stop offset="0" stop-color="#8ac4f4"/><stop offset="1" stop-color="#2a6ac8"/></radialGradient></defs><circle cx="7.5" cy="7.5" r="6.8" fill="url(#ib3)" stroke="#2a5aa8" stroke-width=".6"/><rect x="6.3" y="6" width="2.4" height="6" fill="#fff"/><circle cx="7.5" cy="3.9" r="1.3" fill="#fff"/></svg>
<div class="rt" style="left:1682px;top:698px;font-size:12px;letter-spacing:.45px">Windows file service was started.</div>
<svg class="abs" style="left:1653px;top:722px" width="15" height="15" viewBox="0 0 15 15"><defs><radialGradient id="ib4" cx=".4" cy=".3" r=".8"><stop offset="0" stop-color="#8ac4f4"/><stop offset="1" stop-color="#2a6ac8"/></radialGradient></defs><circle cx="7.5" cy="7.5" r="6.8" fill="url(#ib4)" stroke="#2a5aa8" stroke-width=".6"/><rect x="6.3" y="6" width="2.4" height="6" fill="#fff"/><circle cx="7.5" cy="3.9" r="1.3" fill="#fff"/></svg>
<div class="rt" style="left:1682px;top:722px;font-size:12px;letter-spacing:.45px">Windows file service was stopped.</div>

<svg class="abs" style="left:1613px;top:645px" width="16" height="10" viewBox="0 0 16 10"><path d="M2 8 L8 2.5 L14 8" stroke="#b8bac0" stroke-width="2.4" fill="none"/></svg>
<div class="rt" style="left:1611px;top:670px;font-size:12px;letter-spacing:.2px">1/5</div>
<svg class="abs" style="left:1613px;top:695px" width="16" height="10" viewBox="0 0 16 10"><path d="M2 2 L8 7.5 L14 2" stroke="#333" stroke-width="2.6" fill="none"/></svg>

<!-- connessioni correnti -->
<svg class="abs" style="left:1600px;top:761px" width="26" height="26" viewBox="0 0 26 26">
 <g fill="none" stroke="#1a1a1a" stroke-width="2.5">
  <path d="M13.4 8.6 L8 3.2 A3.5 3.5 0 0 0 3 8.2 L8.4 13.6"/>
  <path d="M12.4 17.4 L17.8 22.8 A3.5 3.5 0 0 0 22.8 17.8 L17.4 12.4"/>
  <path d="M9 9 L16.5 16.5" stroke-width="2.6"/>
 </g>
</svg>
<div class="pt" style="left:1639px;top:763px">Connessioni correnti</div>
<div class="box" style="top:793px;height:136px;background:linear-gradient(#f6f7f9,#e2e4ec 40%,#c4c6d4)"></div>
<div class="abs" style="left:1647px;top:826px;width:253px;height:96px;background:#fff"></div>
<svg class="abs" style="left:1654px;top:806px" width="14" height="14" viewBox="0 0 14 14"><ellipse cx="7" cy="4.5" rx="3" ry="3.8" fill="#444"/><path d="M1 14 Q1.5 9.5 5 8.5 L7 9.3 L9 8.5 Q12.5 9.5 13 14z" fill="#444"/></svg>
<div class="rt" style="left:1671px;top:805px;font-size:12px;letter-spacing:.45px">admin</div>
<div class="rt" style="left:1718px;top:805px;font-size:12px;letter-spacing:.45px">HTTP</div>
<div class="rt" style="left:1772px;top:805px;font-size:12px;letter-spacing:.45px">00:23:23</div>
<svg class="abs" style="left:1874px;top:806px" width="18" height="14" viewBox="0 0 18 14"><path d="M1 12 L5 8 L4 6 L8 2 L11 5 L7 9 L5 8" fill="#222" stroke="#222" stroke-width="1.2"/><circle cx="13.5" cy="9" r="3" fill="none" stroke="#d82a2a" stroke-width="1.4"/><line x1="11.5" y1="7" x2="15.5" y2="11" stroke="#d82a2a" stroke-width="1.2"/></svg>
<svg class="abs" style="left:1613px;top:825px" width="16" height="10" viewBox="0 0 16 10"><path d="M2 8 L8 2.5 L14 8" stroke="#b8bac0" stroke-width="2.4" fill="none"/></svg>
<div class="rt" style="left:1611px;top:850px;font-size:12px;letter-spacing:.2px">1/1</div>
<svg class="abs" style="left:1613px;top:875px" width="16" height="10" viewBox="0 0 16 10"><path d="M2 2 L8 7.5 L14 2" stroke="#b8bac0" stroke-width="2.4" fill="none"/></svg>
<!-- bottom corner -->
<svg class="abs" style="left:1848px;top:937px" width="72" height="22" viewBox="0 0 72 22"><path d="M0 22 L18 0 H72 V22Z" fill="#f0f2f6" stroke="#c8ccd4" stroke-width="1"/><path d="M36 7 L43 13 L50 7" stroke="#111" stroke-width="2.6" fill="none"/></svg>
<div class="abs" style="left:1579px;top:957px;width:341px;height:2px;background:#9aa0a8"></div>

<!-- synology logo -->
<div class="abs" style="left:873px;top:908px;white-space:nowrap;color:#fff;text-shadow:0 0 1px rgba(255,255,255,.6)">
 <span style="font-family:'Liberation Sans';font-weight:bold;font-size:21px;letter-spacing:-1px">Syno</span><span style="font-family:'Liberation Serif';font-size:23px;letter-spacing:-.5px">logy</span>
</div>
<div class="abs" style="left:970px;top:912px;white-space:nowrap;font-size:19px;color:#c4ccd6;letter-spacing:.3px;text-shadow:.7px .7px 0 #707a86,-.5px -.5px 0 #f4f8ff">DSM 4.1</div>
<!-- watermark -->
<svg class="abs" style="left:1632px;top:890px" width="290" height="69" viewBox="0 0 290 69">
 <defs><linearGradient id="wmx" x1="0" y1="0" x2="0" y2="1"><stop offset="0" stop-color="#dce6fa"/><stop offset=".5" stop-color="#a8bcec"/><stop offset="1" stop-color="#6a88d8"/></linearGradient></defs>
 <g opacity=".6">
  <rect x="10" y="8" width="50" height="50" rx="6" transform="rotate(15 35 33)" fill="url(#wmx)" stroke="#eef2fc" stroke-width="1.5"/>
  <path d="M30 20 L44 43 M46 24 L22 36" stroke="#f8faff" stroke-width="5.5" stroke-linecap="round"/>
  <text x="71" y="44" font-family="Liberation Sans" font-size="23" fill="#6278b8" textLength="179" lengthAdjust="spacingAndGlyphs" stroke="#6278b8" stroke-width=".4">xtremehardware.com</text>
 </g>
</svg>

</body></html>
